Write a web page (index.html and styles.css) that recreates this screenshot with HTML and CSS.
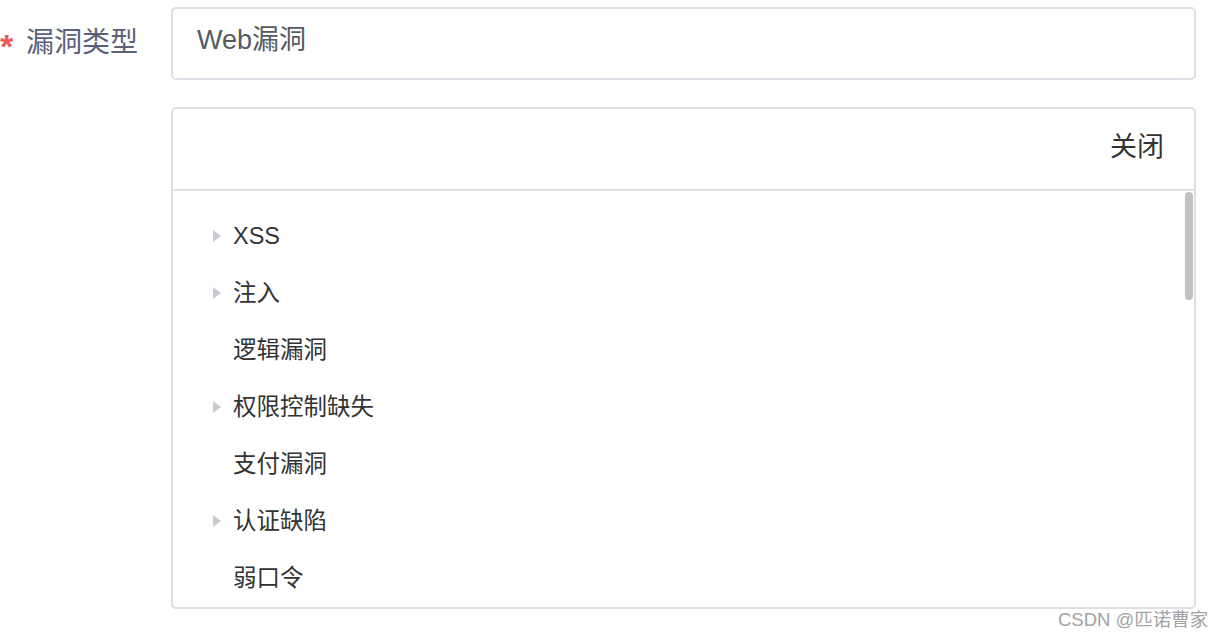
FILE: index.html
```html
<!DOCTYPE html>
<html lang="zh">
<head>
<meta charset="utf-8">
<link rel="stylesheet" href="styles.css">
</head>
<body>
<div class="form-item">
  <div class="label"><span class="star">*</span><span class="label-text">漏洞类型</span></div>
  <div class="content">
    <div class="input">Web漏洞</div>
    <div class="panel">
      <div class="panel-head"><span class="close">关闭</span></div>
      <div class="panel-body">
        <ul class="tree">
          <li class="node"><span class="caret"></span><span class="text">XSS</span></li>
          <li class="node"><span class="caret"></span><span class="text">注入</span></li>
          <li class="node"><span class="caret blank"></span><span class="text">逻辑漏洞</span></li>
          <li class="node"><span class="caret"></span><span class="text">权限控制缺失</span></li>
          <li class="node"><span class="caret blank"></span><span class="text">支付漏洞</span></li>
          <li class="node"><span class="caret"></span><span class="text">认证缺陷</span></li>
          <li class="node"><span class="caret blank"></span><span class="text">弱口令</span></li>
        </ul>
        <div class="thumb"></div>
      </div>
    </div>
  </div>
</div>
<div class="watermark">CSDN @匹诺曹家</div>
</body>
</html>
```
FILE: styles.css
```css
html, body {
  margin: 0;
  padding: 0;
  background: #ffffff;
}
body {
  width: 1224px;
  height: 640px;
  overflow: hidden;
  position: relative;
  font-family: "Liberation Sans", "Noto Sans CJK SC", sans-serif;
}
.form-item {
  display: flex;
  padding-top: 7px;
  padding-right: 28px;
}
.label {
  width: 171px;
  flex: none;
  height: 73px;
  display: flex;
  align-items: center;
  padding-bottom: 2px;
  box-sizing: border-box;
}
.star {
  color: #f05a5a;
  font-size: 34px;
  font-weight: bold;
  line-height: 30px;
  width: 26px;
  padding-left: 0;
  box-sizing: border-box;
  position: relative;
  top: 3px;
}
.label-text {
  color: #5a6178;
  font-size: 28px;
  line-height: 30px;
}
.content {
  flex: 1;
}
.input {
  height: 73px;
  box-sizing: border-box;
  border: 2px solid #dcdfe6;
  border-radius: 5px;
  display: flex;
  align-items: center;
  padding-left: 24px;
  font-size: 27px;
  line-height: 30px;
  color: #555a63;
  padding-bottom: 8px;
}
.panel {
  margin-top: 27px;
  height: 502px;
  box-sizing: border-box;
  border: 2px solid #dcdfe6;
  border-radius: 5px;
  display: flex;
  flex-direction: column;
  overflow: hidden;
}
.panel-head {
  height: 82px;
  flex: none;
  box-sizing: border-box;
  border-bottom: 2px solid #dcdfe6;
  display: flex;
  align-items: center;
  justify-content: flex-end;
  padding-right: 30px;
  padding-bottom: 4px;
}
.close {
  font-size: 27px;
  line-height: 30px;
  color: #333333;
}
.panel-body {
  flex: 1;
  position: relative;
  overflow: hidden;
}
.tree {
  list-style: none;
  margin: 0;
  padding: 16px 0 0 40px;
}
.node {
  height: 57px;
  display: flex;
  align-items: center;
}
.caret {
  width: 0;
  height: 0;
  border-top: 6px solid transparent;
  border-bottom: 6px solid transparent;
  border-left: 8px solid #c8ccd2;
  margin-right: 12px;
}
.caret.blank {
  border-left-color: transparent;
}
.text {
  font-size: 23.5px;
  line-height: 26px;
  color: #333333;
}
.thumb {
  position: absolute;
  top: 1px;
  right: 1px;
  width: 8px;
  height: 108px;
  border-radius: 4px;
  background: #c1c1c1;
}
.watermark {
  position: absolute;
  left: 1058px;
  top: 608px;
  font-size: 18.5px;
  line-height: 24px;
  color: #a3a3a3;
  white-space: nowrap;
}
```
